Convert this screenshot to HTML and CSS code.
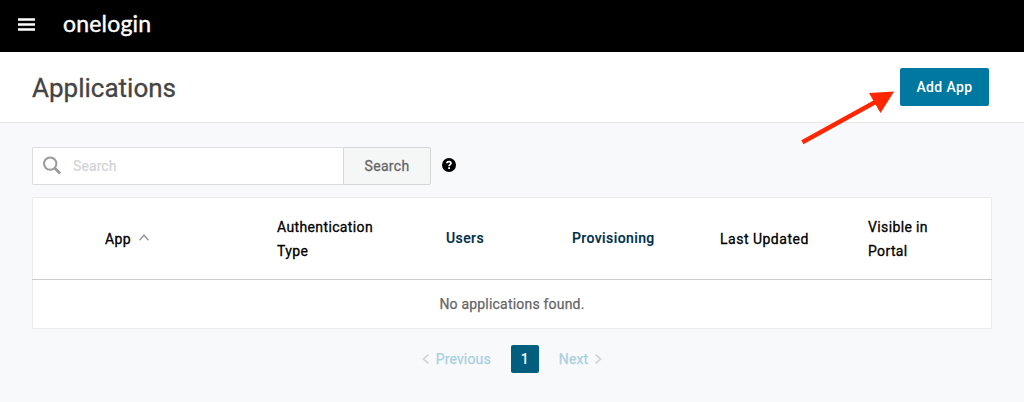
FILE: index.html
```html
<!DOCTYPE html>
<html lang="en">
<head>
<meta charset="utf-8">
<title>Applications</title>
<link rel="stylesheet" href="styles.css">
</head>
<body>
<header class="topbar">
  <svg class="menu" width="17" height="13" viewBox="0 0 17 13"><path d="M0 1.500h17M0 6.500h17M0 11.500h17" stroke="#fff" stroke-width="2.600"/></svg>
  <span class="brand">onelogin</span>
</header>
<div class="heading">
  <h1 class="title">Applications</h1>
  <button class="add">Add App</button>
  <svg class="arrow" width="100" height="62" viewBox="0 0 100 62"><path d="M3.400 54.200 80 12" stroke="#ff2600" stroke-width="4.400"/><path d="M95 3.500 70 5 81.500 25z" fill="#ff2600"/></svg>
</div>
<main class="content">
  <div class="search-row">
    <div class="search">
      <svg class="lens" width="20" height="20" viewBox="0 0 20 20" fill="none" stroke="#9a9a9a"><circle cx="7.200" cy="7.600" r="6.200" stroke-width="2"/><path d="M11.700 12l5.400 5.400" stroke-width="2.800"/></svg>
      <span class="placeholder">Search</span>
    </div>
    <button class="search-button">Search</button>
    <svg class="help" width="14" height="14" viewBox="0 0 14 14"><circle cx="7" cy="7" r="7"/><path d="M4.900 5.300C5 3.100 9 3.100 9 5.300 9 6.700 7.100 6.700 7.100 8.300" fill="none" stroke="#fff" stroke-width="1.700"/><path d="M6.200 9.300h1.800v1.700H6.200z" fill="#fff"/></svg>
  </div>
  <section class="table">
    <div class="table-head">
      <div class="cell app">App <svg width="10" height="7" viewBox="0 0 10 7" fill="none" stroke="#999" stroke-width="1.600"><path d="M.5 6.300 5 1.300l4.500 5"/></svg></div>
      <div class="cell">Authentication<br>Type</div>
      <div class="cell link">Users</div>
      <div class="cell link">Provisioning</div>
      <div class="cell updated">Last Updated</div>
      <div class="cell visible">Visible in<br>Portal</div>
    </div>
    <div class="empty">No applications found.</div>
  </section>
  <nav class="pager">
    <svg width="8" height="10" viewBox="0 0 8 10"><path d="M6.300 .5 1.500 5l4.800 4.500"/></svg>
    <span class="previous">Previous</span>
    <span class="page">1</span>
    <span class="next">Next</span>
    <svg width="8" height="10" viewBox="0 0 8 10"><path d="M1.700 .5 6.500 5l-4.800 4.500"/></svg>
  </nav>
</main>
</body>
</html>
```

FILE: styles.css
```css
* { box-sizing: border-box; }
body { margin: 0; height: 402px; background: #f7f9fb; font: 14px/24px Roboto, sans-serif; color: #000; overflow: hidden; }
button { font: inherit; padding: 0; border: 0; }
svg { display: block; flex: none; }
.topbar { height: 52px; background: #000; display: flex; align-items: center; padding: 0 0 3px 18px; }
.brand { margin: -3px 0 0 28px; color: #fff; font: 400 23px/30px Lato, sans-serif; letter-spacing: .2px; -webkit-text-stroke: .4px #fff; }
.heading { height: 71px; position: relative; display: flex; align-items: center; justify-content: space-between; padding: 0 35px 0 32px; background: #fff; border-bottom: 1px solid #e6e7e8; }
.title { margin: 2px 0 0; font-size: 26px; font-weight: 400; color: #444; -webkit-text-stroke: .3px #444; }
.add { width: 89px; height: 38px; border-radius: 2px; background: #0078a0; color: #fff; font-weight: 500; letter-spacing: .4px; }
.arrow { position: absolute; left: 799px; top: 36px; }
.content { padding: 24px 32px 0; }
.search-row { display: flex; height: 38px; }
.search { width: 311px; display: flex; align-items: center; padding-left: 10px; background: #fff; border: 1px solid #dcddde; border-right: 0; border-radius: 2px 0 0 2px; }
.placeholder { margin-left: 10px; color: #d2d3d4; letter-spacing: .1px; -webkit-text-stroke: .2px #d2d3d4; }
.search-button { width: 88px; color: #666; background: #f5f6f6; border: 1px solid #d5d7d8; border-radius: 0 2px 2px 0; letter-spacing: .3px; -webkit-text-stroke: .3px #666; }
.help { margin: 11px 0 0 11px; }
.table { width: 960px; height: 132px; margin-top: 12px; background: #fff; border: 1px solid #ececec; }
.table-head { height: 82px; margin: 0 -1px; padding-left: 73px; border-bottom: 1px solid #ccc; display: grid; grid-template-columns: 172px 169px 126px 148px 148px 1fr; align-items: center; }
.cell { letter-spacing: .37px; -webkit-text-stroke: .3px #000; }
.updated { letter-spacing: .5px; }
.app { display: flex; align-items: center; gap: 8px; }
.app svg { margin-top: -3px; }
.link { font-weight: 500; color: #002f48; letter-spacing: .4px; margin-top: -2px; -webkit-text-stroke: .15px #002f48; }
.empty { height: 49px; line-height: 49px; text-align: center; color: #666; letter-spacing: .2px; -webkit-text-stroke: .25px #666; }
.pager { display: flex; justify-content: center; align-items: center; margin-top: 16px; color: #a9d0de; }
.pager svg { fill: none; stroke: #d5d8da; stroke-width: 1.800; }
.previous, .next { letter-spacing: .15px; -webkit-text-stroke: .25px #a9d0de; }
.previous { margin: 0 20px 0 6px; }
.page { width: 28px; height: 28px; line-height: 28px; text-align: center; border-radius: 2px; background: #005f7f; color: #fff; font-weight: 500; }
.next { margin: 0 6px 0 20px; }
```
